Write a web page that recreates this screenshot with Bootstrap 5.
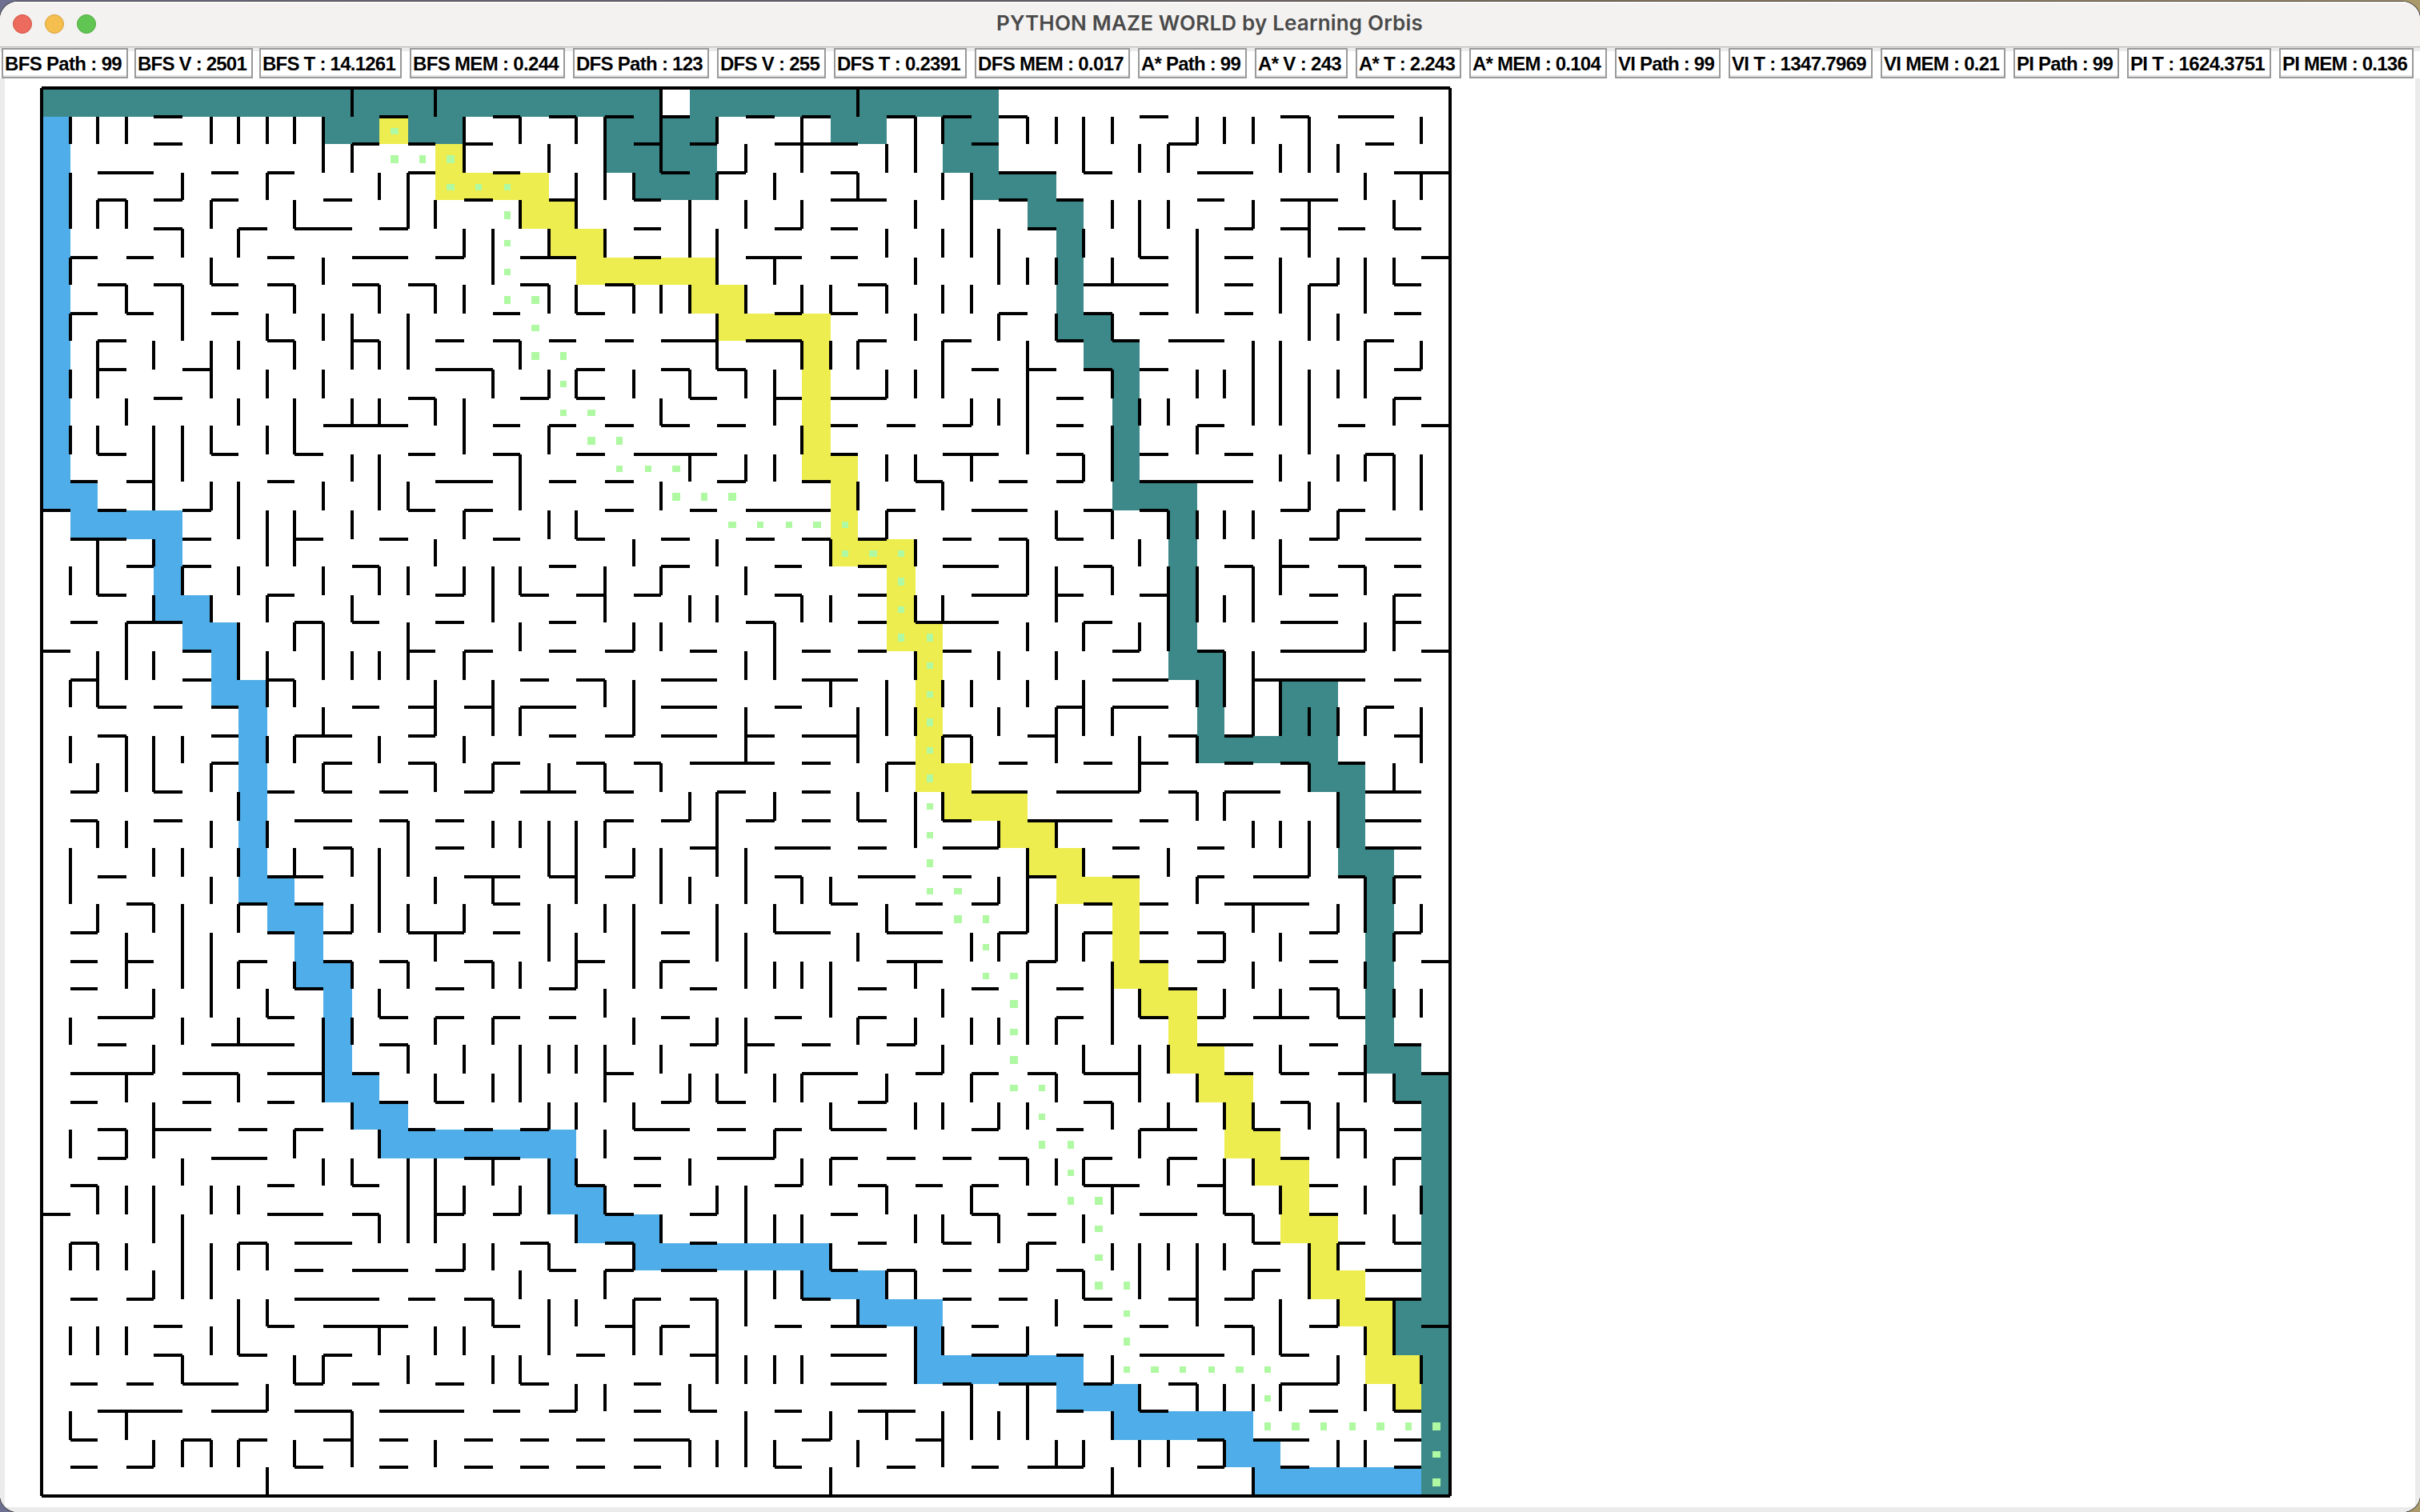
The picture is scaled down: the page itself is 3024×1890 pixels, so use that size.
<!DOCTYPE html>
<html lang="en">
<head>
<meta charset="utf-8">
<meta name="viewport" content="width=device-width, initial-scale=1">
<title>PYTHON MAZE WORLD by Learning Orbis</title>
<link rel="stylesheet" href="https://cdn.jsdelivr.net/npm/bootstrap@5.3.0/dist/css/bootstrap.min.css">
<style>
  body { background: linear-gradient(90deg, #6d7090, #70697a 45%, #8c7a58 65%, #ab9a6c); }
  .app-window { padding-top: 2px; }
  .app-shell { border-radius: 22px; background: #ebebeb; box-shadow: 0 0 0 1px #3d3a3a; }
  .title-bar { height: 56px; background: #f4f2f0; padding-left: 16px; box-shadow: inset 0 2px 0 #fcfbfa; flex: none; }
  .dots-group { gap: 16px; }
  .light { width: 24px; height: 24px; border: 1px solid; }
  .light-close { background: #ec6a5e; border-color: #d1503f; }
  .light-min { background: #f4bf4f; border-color: #d6a03a; }
  .light-zoom { background: #61c554; border-color: #4faa3d; }
  .win-title { font: 600 26px/53px Inter, sans-serif; color: #4a4a4a; white-space: pre; width: 532px; margin-left: 1125px; padding-bottom: 3px; }
  .title-rule { height: 2px; flex: none; background: linear-gradient(#bdbcbb 50%, #dedede 50%); }
  .stat-bar { height: 38px; flex: none; background: linear-gradient(#ebebeb 4px, #fff 4px); }
  .stat-item { height: 38px; background: #fff; border: 2px solid #9a9a9a; border-right-color: #999; box-shadow: inset 0 -2px 0 #e4e4e4;
    font: bold 24px/34px "Liberation Sans", Arial, sans-serif; color: #000; white-space: pre; padding-left: 2px; padding-top: 1px; overflow: hidden; }
  .maze-area { border: solid #ebebeb; border-width: 0 6px 6px 6px; background: #fff; }
  .maze-area svg { shape-rendering: crispEdges; }
</style>
<script src="https://cdn.jsdelivr.net/npm/bootstrap@5.3.0/dist/js/bootstrap.bundle.min.js"></script>
</head>
<body class="m-0 vh-100 overflow-hidden">
<div class="app-window vh-100">
  <div class="app-shell h-100 d-flex flex-column overflow-hidden">
    <header class="title-bar d-flex align-items-center">
      <div class="dots-group d-flex">
        <span class="light light-close rounded-circle"></span>
        <span class="light light-min rounded-circle"></span>
        <span class="light light-zoom rounded-circle"></span>
      </div>
      <div class="win-title" id="winTitle"><span>PYTHON MAZE WORLD by Learning Orbis</span></div>
    </header>
    <div class="title-rule"></div>
    <div class="stat-bar d-flex" id="stats"></div>
    <main class="maze-area flex-grow-1">
      <svg id="maze" class="d-block" width="3012" height="1786" viewBox="6 98 3012 1786"></svg>
    </main>
  </div>
</div>
<script>
// Label text, label width, gap before the label
const stats = [
  ["BFS Path : 99",158,2],["BFS V : 2501",148,8],["BFS T : 14.1261",178,8],["BFS MEM : 0.244",194,10],
  ["DFS Path : 123",170,10],["DFS V : 255",136,10],["DFS T : 0.2391",166,10],["DFS MEM : 0.017",194,10],
  ["A* Path : 99",136,10],["A* V : 243",116,10],["A* T : 2.243",132,10],["A* MEM : 0.104",172,10],
  ["VI Path : 99",132,10],["VI T : 1347.7969",180,10],["VI MEM : 0.21",156,10],
  ["PI Path : 99",132,10],["PI T : 1624.3751",180,10],["PI MEM : 0.136",168,10]];

// Tighten the tracking so that a text fills the given width
function fit(span, width) {
  const gap = (width - span.getBoundingClientRect().width) / span.textContent.length;
  span.style.letterSpacing = gap.toFixed(3) + "px";
}
const bar = document.getElementById("stats");
for (const [text, w, gap] of stats) {
  const box = document.createElement("div");
  box.className = "stat-item flex-shrink-0";
  box.style.width = w + "px";
  box.style.marginLeft = gap + "px";
  const s = document.createElement("span");
  s.textContent = text;
  box.appendChild(s);
  bar.appendChild(box);
  fit(s, w - 12);
}
fit(document.querySelector("#winTitle span"), 533);

// Horizontal walls: line number 1..49, column spans
const H = `4-5 12-13 16-17 18-19 20-21 22-23 25-26 27-28 30-31 32-33 34-35 39-40 44-45 46-48
4-5 11-12 13-14 15-16 21-22 23-24 26-29 33-34 40-41 47-48
2-4 6-7 8-9 13-14 16-17 22-23 24-25 28-29 34-36 37-38 41-43 48-50
2-3 4-5 6-7 10-11 15-16 18-19 21-22 28-30 34-35 36-37 41-42 44-46
4-5 7-8 9-11 12-13 21-22 26-27 28-29 35-36 42-43 44-45 46-47 48-49
1-2 3-4 8-9 11-13 14-15 17-19 21-22 25-27 28-29 39-40 42-43 49-50
2-3 4-5 6-7 8-9 11-12 13-14 17-18 20-21 29-30 37-40 42-43 45-46 48-49
1-2 3-4 6-7 16-17 19-20 26-27 28-29 34-35 37-38 39-40 42-43 48-49
2-3 8-9 11-12 14-15 16-17 18-19 20-21 22-24 25-27 29-30 32-33 36-37 38-39 40-42 47-48
2-3 5-6 14-16 19-20 22-23 24-25 33-34 35-36 37-38 39-40 48-49
4-5 13-14 17-18 19-20 23-24 26-27 28-30 36-37 48-49
10-13 16-17 18-19 20-21 22-23 24-25 28-29 30-31 32-33 36-37 41-42 46-47 49-50
2-3 6-7 9-10 13-14 16-17 19-20 21-24 28-29 32-34 36-37 39-40 42-43 47-48
1-2 3-4 8-9 14-16 18-19 20-21 24-25 27-28 31-32 34-35 36-37 39-43
0-1 2-3 5-6 13-14 15-16 20-21 23-24 25-28 30-31 33-35 37-38 39-40 44-45 46-47
1-3 5-6 9-10 12-13 16-17 19-20 22-23 25-26 27-28 29-30 32-33 34-35 36-37 45-46 47-49
3-4 5-6 11-12 18-19 22-23 26-27 29-30 32-34 37-38 42-43 44-45 46-47 48-49
2-3 8-9 14-15 17-18 19-20 21-22 26-27 29-30 33-35 36-37 39-40 45-46 48-49
1-2 3-5 9-10 11-12 14-15 18-19 25-26 29-30 31-34 37-38 44-46 48-49
0-1 5-6 13-14 15-16 18-19 20-21 23-24 27-28 29-30 32-33 38-39 41-42 44-47 49-50
1-2 5-6 8-9 17-18 19-20 22-24 27-29 38-40 43-47 48-49
2-3 4-5 6-7 11-12 13-14 15-16 17-19 22-24 26-27 36-37 38-40 47-48
2-3 6-7 9-11 13-14 18-19 20-21 22-24 25-26 27-29 32-33 35-36 40-41 42-43 48-49
6-7 10-11 13-14 16-17 19-20 21-22 23-26 27-28 30-31 34-35 37-38 39-40 42-43 44-45 46-47
1-2 4-5 8-9 10-11 12-13 15-16 17-19 20-21 24-25 27-28 33-35 36-39 40-41 42-44 47-49
1-2 4-5 9-11 12-13 14-15 20-21 22-23 25-26 27-28 29-30 32-33 35-38 39-40 47-49
10-11 14-15 23-24 26-28 29-30 32-34 38-39 41-42 47-49
2-3 8-10 15-17 18-19 20-21 26-27 29-31 32-33 35-36 38-39 41-42 43-45 46-47 48-49
3-4 7-8 9-10 16-17 28-29 31-32 33-34 37-38 39-40 42-45
1-2 8-9 10-11 13-15 16-17 22-23 26-28 30-32 34-35 37-38 39-40 41-42 45-46 48-49
1-2 3-4 7-8 10-11 12-13 15-16 19-20 22-23 30-32 35-36 39-40 41-42 45-46 49-50
1-2 9-10 14-15 18-19 23-24 29-30 33-34 36-37 40-41 45-46
2-4 8-9 12-13 14-15 16-17 18-19 22-23 26-27 29-30 36-37 39-40 41-42 43-45 46-47
2-3 6-9 12-13 23-24 25-26 27-28 30-31 41-43 45-46 48-49
1-4 5-7 8-10 11-12 20-21 27-29 31-32 33-34 35-36 37-39 42-43 44-45 46-47 49-50
1-2 5-6 8-9 12-13 14-15 22-23 24-25 29-30 37-38 44-45 48-49
2-3 4-6 7-8 9-10 13-14 15-16 17-18 21-23 24-25 26-27 28-30 33-34 36-37 39-41 43-44 46-47 48-49
2-3 6-8 15-17 21-22 24-26 28-29 30-31 32-33 34-35 37-38 40-41 44-45 48-49
1-2 8-9 11-12 19-20 21-22 26-27 29-30 31-32 33-34 37-39 41-42 45-46
0-1 8-10 11-12 14-15 16-17 20-21 23-24 28-29 33-34 35-36 39-41 42-43 45-46
1-2 7-8 9-11 17-18 20-21 23-24 29-30 32-33 35-36 43-44 46-47 48-49
9-10 11-13 14-15 18-19 20-21 22-24 28-29 30-31 32-33 34-35 36-37 43-44 47-49
1-2 3-4 9-12 13-14 15-16 21-22 23-24 27-28 32-33 34-35 37-38 40-41 42-43 47-49
4-5 8-9 10-13 16-17 20-21 22-23 26-27 28-30 33-34 37-38 39-40 42-43 45-46 49-50
4-5 7-8 10-11 19-20 23-24 28-30 33-35 36-37 39-42 44-45
1-2 3-4 5-7 9-10 11-12 14-15 17-18 21-22 28-30 32-33 34-36 37-38 40-41 44-46
2-5 6-8 9-11 12-15 16-17 18-19 21-22 23-24 26-27 29-31 36-37 39-40 45-46 48-49
1-2 5-6 7-8 10-11 12-13 15-16 17-18 19-20 21-23 27-28 31-32 41-42 43-45 48-49
1-2 3-4 9-10 12-13 15-16 17-18 19-20 21-22 26-27 30-31 33-34 35-37 41-42 44-45 48-49`;

// Vertical walls: row 0..49, column lines
const V = `11 14 22 29
1 2 3 6 7 8 9 10 15 17 19 20 22 24 27 31 32 35 36 37 38 41 42 43 45 49
10 11 15 18 20 22 25 27 30 31 37 39 40 44 45 46
1 5 8 12 13 19 20 21 24 26 29 32 33 47 49
1 2 3 6 9 13 14 17 19 23 25 27 31 33 38 39 40 43 45 48
5 7 15 16 18 20 23 24 30 32 33 34 37 39 41 45
1 6 10 16 24 26 31 34 35 36 38 41 44 46 47 48
3 5 9 12 14 15 18 19 21 22 23 25 27 28 30 32 33 41 44 45 47
1 5 8 10 11 13 24 31 34 36 38 45 46
2 4 6 7 9 11 12 13 17 24 27 28 29 32 35 43 44 47 49
1 2 6 8 10 16 18 19 21 23 25 26 30 31 32 35 38 41 42 43 44 45 46 47
3 7 9 11 12 14 15 22 26 33 34 35 39 40 43 44 45 48
1 2 4 5 6 8 9 15 18 27 35 38 41 45
4 5 11 12 17 23 25 26 30 31 33 37 38 44 46 47 48 49
4 6 7 10 12 13 17 22 29 32 45 48 49
7 8 9 11 15 18 19 30 36 38 40 41 42 43 46
2 4 8 9 14 21 24 28 31 35 39 44
1 2 5 7 10 12 13 15 16 17 20 22 25 35 36 38 40 41 43 44 47
4 6 8 11 16 20 23 24 27 28 31 32 36 40 41 42 43 48
3 7 9 10 13 17 21 22 26 35 37 39 40 47 48
2 3 4 7 8 10 11 12 13 15 25 26 31 34 36 42 43
1 2 8 9 14 16 20 21 28 30 32 33 35 37 41 42 43 44
10 14 16 17 21 25 29 30 31 34 36 37 38 43 44 45 46 47 49
1 3 4 5 8 9 12 15 25 29 32 33 36 39 41 49
2 3 4 6 10 14 16 18 20 22 30 39 45 48
7 23 24 26 29 31 32 41 42 46
2 3 6 8 13 16 17 18 19 20 24 31 34 36 43 44 45 46
1 4 5 7 9 11 12 13 18 19 21 22 24 25 35 37 40 45
1 6 12 14 16 19 22 23 25 27 28 34 35 41 47 48
2 4 5 7 11 12 13 15 18 20 21 24 26 30 35 36 43 46 47 49
3 5 6 14 18 19 21 24 25 29 33 34 36 37 42 44 48
3 5 6 7 9 11 13 16 17 19 21 22 25 26 27 28 31 35 38 43 47
4 6 8 12 20 28 32 35 38 39 42 44 46 48 49
1 5 7 10 11 14 16 21 24 25 29 31 33 34 35 36 38
4 10 13 15 17 18 19 20 22 25 32 37 39 40 44 47
3 7 10 14 16 17 20 23 24 26 27 30 33 36 39 41 47 48
4 11 18 19 21 28 31 32 34 35 38 40 42 43 45 46
1 3 4 9 12 20 26 39 46 47
5 10 11 13 14 16 18 19 23 27 28 35 36 37 40 42 43 48
2 3 4 6 7 13 14 15 17 18 20 24 25 30 33 38 42 44 47 49
4 5 12 13 14 19 22 25 26 27 31 32 34 37 43 48
1 2 3 5 6 7 8 15 16 18 21 28 35 38 39 40 41 42 45 46
4 5 6 17 20 25 26 27 30 31 37 39 41 43 45
7 8 16 18 19 21 24 25 29 36 41 44 46 48
1 2 3 6 7 12 14 15 18 21 22 24 31 32 35 43 44 47 48
5 9 10 13 16 17 24 25 26 27 31 38 46 49
8 19 20 23 33 35 39 41 42 43 44 47 48
1 3 11 25 28 30 32 33 34 35 38
4 5 6 7 9 11 14 23 24 25 26 29 32 36 37 39 40 42 46 47
8 28 38 43`;

// Paths: "first row[-last row]:from col-to col"
const teal = "0:0-22 0:23-34 1:10-15 1-2:20-24 1:28-30 1-2:32-34 3:21-24 3:33-36 4:35-37 5-7:36-37 8:36-38 9:37-39 10-13:38-39 14:38-41 15-19:40-41 20:40-42 21-22:41-42 21-22:44-46 23:41-46 24:45-47 25-26:46-47 27:46-48 28-33:47-48 34:47-49 35:48-50 36-42:49-50 43-44:48-50 45-49:49-50";
const yellow = "1:12-13 2:14-15 3:14-18 4:17-19 5:18-20 6:19-24 7:23-25 8:24-28 9-12:27-28 13:27-29 14-15:28-29 16:28-31 17-18:30-31 19:30-32 20-23:31-32 24:31-33 25:32-35 26:34-36 27:35-37 28:36-39 29-30:38-39 31:38-40 32:39-41 33:40-41 34:40-42 35:41-43 36:42-43 37:42-44 38:43-45 39:44-45 40:44-46 41:45-46 42:45-47 43:46-48 44:47-48 45:47-49 46:48-49";
const blue = "1-13:0-1 14:0-2 15:1-5 16-17:4-5 18:4-6 19:5-7 20:6-7 21:6-8 22-27:7-8 28:7-9 29:8-10 30:9-10 31:9-11 32-34:10-11 35:10-12 36:11-13 37:12-19 38:18-19 39:18-20 40:19-22 41:21-28 42:27-30 43:29-32 44:31-32 45:31-37 46:36-39 47:38-43 48:42-44 49:43-49";
const steps = "1:12-13 2:12-15 3:14-17 4-6:16-17 7:16-18 8:17-18 9:17-19 10:18-19 11:18-20 12:19-21 13:20-23 14:22-25 15:24-29 16:28-31 17-18:30-31 19:30-32 20-27:31-32 28:31-33 29:32-34 30:33-34 31:33-35 32-34:34-35 35:34-36 36:35-36 37:35-37 38:36-37 39:36-38 40-41:37-38 42:37-39 43-44:38-39 45:38-44 46:43-44 47:43-50 48-49:49-50";

const W = 17.6, px = v => 2 * Math.round(v);
const X = k => px(26 + W * k), Y = k => px(55 + W * k);
const spans = s => s.split(" ").map(t => {
  const [r, c] = t.split(":"), [r0, r1 = r0] = r.split("-");
  const [c0, c1] = c.split("-");
  return [+r0, +r1 + 1, +c0, +c1];
});
const fill = (s, color) => `<path fill="${color}" d="${spans(s).map(([a, b, c, d]) =>
  `M${X(c)} ${Y(a)}H${X(d)}V${Y(b)}H${X(c)}z`).join("")}"/>`;

let dots = "";
for (const [a, b, c, d] of spans(steps))
  for (let r = a; r < b; r++) for (let k = c; k < d; k++) {
    const x = 26 + W * k + W / 2.5, y = 55 + W * r + W / 2.5;
    dots += `M${px(x)} ${px(y)}H${px(x + W / 4)}V${px(y + W / 4)}H${px(x)}z`;
  }

let walls = `M52 110H1812M52 1870H1812M52 110V1870M1812 110V1870`;
H.split("\n").forEach((line, i) => line.trim().split(" ").forEach(t => {
  const [a, b] = t.split("-");
  walls += `M${X(+a)} ${Y(i + 1)}H${X(+b)}`;
}));
V.split("\n").forEach((line, r) => line.trim().split(" ").forEach(k => {
  walls += `M${X(+k)} ${Y(r)}V${Y(r + 1)}`;
}));

document.getElementById("maze").innerHTML =
  fill(teal, "#3d898a") + fill(blue, "#4faee9") + fill(yellow, "#eeed4f") +
  `<path fill="#aff9a2" d="${dots}"/><path fill="none" stroke="#000" stroke-width="4" d="${walls}"/>`;
</script>
</body>
</html>
